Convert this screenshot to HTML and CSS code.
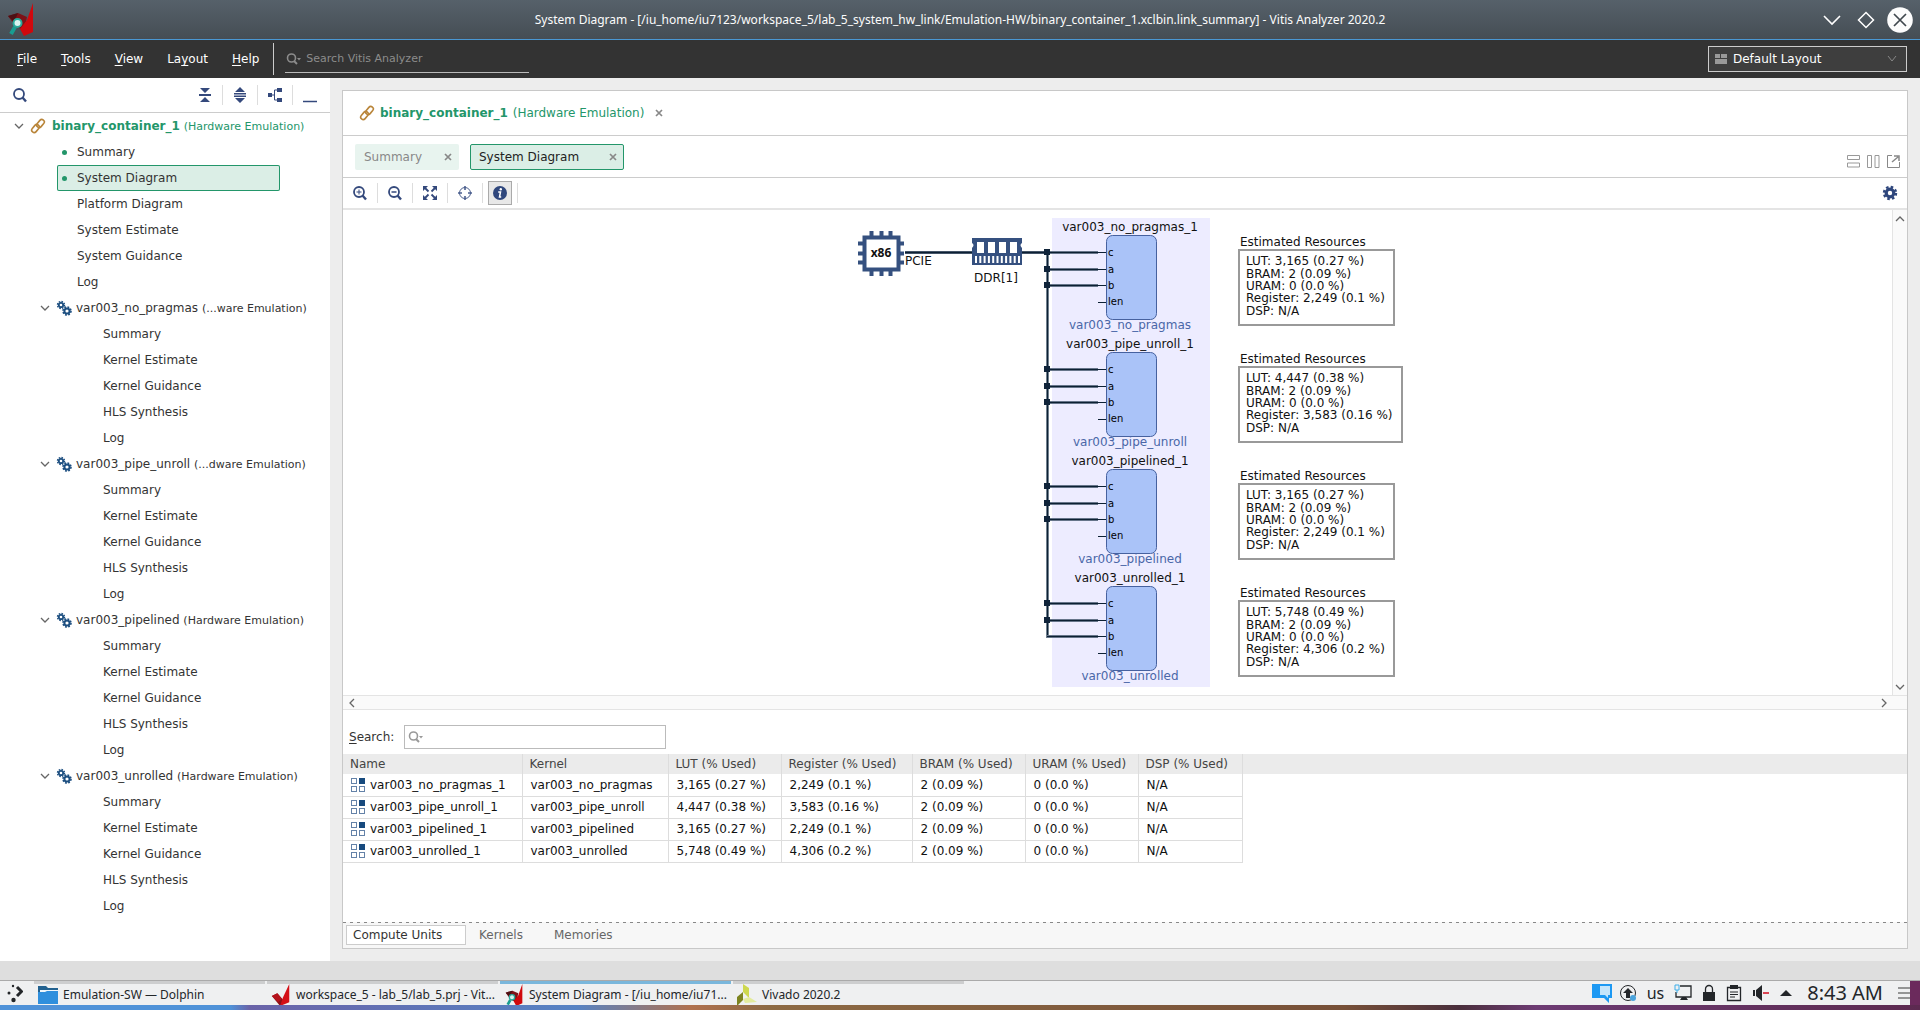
FILE: index.html
```html
<!DOCTYPE html>
<html lang="en">
<head>
<meta charset="utf-8">
<title>Vitis Analyzer 2020.2</title>
<link rel="stylesheet" href="styles.css">
</head>
<body>
<svg class="defs" aria-hidden="true">
  <symbol id="i-link" viewBox="0 0 16 16"><g fill="none" stroke="#b9853a" stroke-width="1.600"><rect x="6" y="3" width="9" height="5" rx="2.500" transform="rotate(-50 10.500 5.500)"/><rect x="1" y="8" width="9" height="5" rx="2.500" transform="rotate(-50 5.500 10.500)"/></g></symbol>
  <symbol id="i-down" viewBox="0 0 10 10"><path d="M1 3l4 4 4-4" fill="none" stroke="#666" stroke-width="1.300"/></symbol>
  <symbol id="i-close" viewBox="0 0 8 8"><path d="M1 1l6 6M7 1L1 7" stroke="#888" stroke-width="1.700"/></symbol>
  <symbol id="i-gears" viewBox="0 0 16 16"><g fill="none" stroke="#1d4f80"><circle cx="5" cy="5" r="2.200" stroke-width="1.800"/><circle cx="5" cy="5" r="3.500" stroke-width="1.400" stroke-dasharray="1.600 1.149"/><circle cx="11" cy="11" r="2.600" stroke-width="2"/><circle cx="11" cy="11" r="4" stroke-width="1.600" stroke-dasharray="1.800 1.342"/></g></symbol>
  <symbol id="i-search" viewBox="0 0 16 16"><circle cx="7" cy="7" r="5" fill="none" stroke="currentColor" stroke-width="1.800"/><path d="M10.500 10.500l3.500 4" stroke="currentColor" stroke-width="2.400"/></symbol>
  <symbol id="i-searchmenu" viewBox="0 0 18 14"><circle cx="5.500" cy="6" r="4" fill="none" stroke="currentColor" stroke-width="1.600"/><path d="M8 9l3 3" stroke="currentColor" stroke-width="2"/><path d="M11 6h4l-2 2.500z" fill="currentColor"/></symbol>
  <symbol id="i-cu" viewBox="0 0 16 16"><g fill="#fff" stroke="#6482a8"><rect x="1.500" y="1.500" width="5" height="5"/><rect x="1.500" y="9.500" width="5" height="5"/><rect x="9.500" y="9.500" width="5" height="5"/></g><path d="M9 1h6v6H9z" fill="#174a7e"/></symbol>
  <symbol id="i-vitis" viewBox="0 0 20 24"><path d="M0 13l6-3 7 8-4 6z" fill="#8d1016"/><path d="M0 13l6-3 5 6-4 4z" fill="#b5121b"/><path d="M19 0v20l-10 4 3-9z" fill="#d40f16"/></symbol>
  <symbol id="i-analyzer" viewBox="0 0 27 33"><path d="M1 13l10-3 9 4-3 13-8-3z" fill="#7d1218"/><path d="M1 13l6 6 4-9z" fill="#4d1014"/><path d="M26 0v29l-9 4-4-7 7-9z" fill="#d0080d"/><path d="M8 24l-4 7" stroke="#189d91" stroke-width="4"/><circle cx="10.500" cy="20" r="4" fill="#d9f3ef" stroke="#29a99b" stroke-width="2"/></symbol>
  <symbol id="block" viewBox="0 0 120 117">
    <path d="M7 34.500h51M7 51.500h51M7 67.500h51" stroke="#66758a" stroke-width="3"/>
    <path d="M7 34.500h59M7 51.500h59M7 67.500h59M58 84.500h8" stroke="#0c2033"/>
    <rect x="66.500" y="17.500" width="50" height="84" rx="6" fill="#aac3f8" stroke="#46619f"/>
  </symbol>
</svg>

<header class="titlebar">
  <svg class="app-logo" width="27" height="33"><use href="#i-analyzer"/></svg>
  <h1>System Diagram - [/iu_home/iu7123/workspace_5/lab_5_system_hw_link/Emulation-HW/binary_container_1.xclbin.link_summary] - Vitis Analyzer 2020.2</h1>
  <div class="window-controls">
    <button aria-label="Minimize"><svg width="26" height="26"><path d="M5 9l8 8 8-8" fill="none" stroke="#fff" stroke-width="1.600"/></svg></button>
    <button aria-label="Maximize"><svg width="26" height="26"><path d="M13 5.500l7.500 7.500-7.500 7.500L5.500 13z" fill="none" stroke="#fff" stroke-width="1.500"/></svg></button>
    <button aria-label="Close"><svg width="26" height="26"><circle cx="13" cy="13" r="12.800" fill="#fcfcfc"/><path d="M7 7l12 12M19 7L7 19" stroke="#40484e" stroke-width="1.700"/></svg></button>
  </div>
</header>

<div class="menubar">
  <nav class="menus">
    <button><u>F</u>ile</button><button><u>T</u>ools</button><button><u>V</u>iew</button><button>La<u>y</u>out</button><button><u>H</u>elp</button>
  </nav>
  <label class="quick"><svg width="18" height="14"><use href="#i-searchmenu"/></svg><input type="text" placeholder="Search Vitis Analyzer" aria-label="Search Vitis Analyzer"></label>
  <label class="layout-select">
    <svg width="12" height="10"><path d="M0 0h5v4H0zM6 0h6v4H6zM0 5h12v5H0z" fill="#999"/></svg>
    <select aria-label="Layout"><option>Default Layout</option></select>
    <svg width="10" height="10"><path d="M1 2l4 5 4-5" fill="none" stroke="#888"/></svg>
  </label>
</div>

<div class="workbench">
  <aside class="sidebar">
    <div class="side-tools">
      <button aria-label="Search"><svg width="16" height="16"><use href="#i-search"/></svg></button>
      <div class="side-group">
        <button aria-label="Collapse all"><svg width="12" height="16"><path d="M1 1h10L6 6zM1 15h10l-5-5zM0 7h12v2H0z" fill="#34497c"/></svg></button>
        <button aria-label="Expand all"><svg width="12" height="16"><path d="M6 0l5 5H1zM0 6h12v1.500H0zM0 8.500h12V10H0zM1 11h10l-5 5z" fill="#34497c"/></svg></button>
        <button aria-label="Hierarchy"><svg width="16" height="16"><path d="M1 6h4v4H1zM10 1h5v4h-5zM10 11h5v4h-5z" fill="#34497c"/><path d="M5 8h2.500M11 3H7.500v10H11" fill="none" stroke="#34497c"/></svg></button>
        <button aria-label="Hide"><svg width="14" height="16"><path d="M0 14.500h14" stroke="#34497c" stroke-width="1.500"/></svg></button>
      </div>
    </div>
    <ul class="tree">
      <li class="root"><svg class="twist"><use href="#i-down"/></svg><svg width="16" height="16"><use href="#i-link"/></svg><a href="#"><b>binary_container_1</b> <small>(Hardware Emulation)</small></a></li>
      <li class="leaf open"><a href="#">Summary</a></li>
      <li class="leaf open selected"><a href="#">System Diagram</a></li>
      <li class="leaf"><a href="#">Platform Diagram</a></li>
      <li class="leaf"><a href="#">System Estimate</a></li>
      <li class="leaf"><a href="#">System Guidance</a></li>
      <li class="leaf"><a href="#">Log</a></li>
      <li class="kernel"><svg class="twist"><use href="#i-down"/></svg><svg width="16" height="16"><use href="#i-gears"/></svg><a href="#">var003_no_pragmas <small>(...ware Emulation)</small></a></li>
      <li class="deep"><a href="#">Summary</a></li>
      <li class="deep"><a href="#">Kernel Estimate</a></li>
      <li class="deep"><a href="#">Kernel Guidance</a></li>
      <li class="deep"><a href="#">HLS Synthesis</a></li>
      <li class="deep"><a href="#">Log</a></li>
      <li class="kernel"><svg class="twist"><use href="#i-down"/></svg><svg width="16" height="16"><use href="#i-gears"/></svg><a href="#">var003_pipe_unroll <small>(...dware Emulation)</small></a></li>
      <li class="deep"><a href="#">Summary</a></li>
      <li class="deep"><a href="#">Kernel Estimate</a></li>
      <li class="deep"><a href="#">Kernel Guidance</a></li>
      <li class="deep"><a href="#">HLS Synthesis</a></li>
      <li class="deep"><a href="#">Log</a></li>
      <li class="kernel"><svg class="twist"><use href="#i-down"/></svg><svg width="16" height="16"><use href="#i-gears"/></svg><a href="#">var003_pipelined <small>(Hardware Emulation)</small></a></li>
      <li class="deep"><a href="#">Summary</a></li>
      <li class="deep"><a href="#">Kernel Estimate</a></li>
      <li class="deep"><a href="#">Kernel Guidance</a></li>
      <li class="deep"><a href="#">HLS Synthesis</a></li>
      <li class="deep"><a href="#">Log</a></li>
      <li class="kernel"><svg class="twist"><use href="#i-down"/></svg><svg width="16" height="16"><use href="#i-gears"/></svg><a href="#">var003_unrolled <small>(Hardware Emulation)</small></a></li>
      <li class="deep"><a href="#">Summary</a></li>
      <li class="deep"><a href="#">Kernel Estimate</a></li>
      <li class="deep"><a href="#">Kernel Guidance</a></li>
      <li class="deep"><a href="#">HLS Synthesis</a></li>
      <li class="deep"><a href="#">Log</a></li>
    </ul>
  </aside>

  <main class="panel">
    <div class="doc-head"><svg width="16" height="16"><use href="#i-link"/></svg><span><b>binary_container_1</b> (Hardware Emulation)</span><button aria-label="Close binary_container_1"><svg width="8" height="8"><use href="#i-close"/></svg></button></div>
    <div class="tabs">
      <div class="tab"><span>Summary</span><button aria-label="Close Summary"><svg width="8" height="8"><use href="#i-close"/></svg></button></div>
      <div class="tab active"><span>System Diagram</span><button aria-label="Close System Diagram"><svg width="8" height="8"><use href="#i-close"/></svg></button></div>
      <div class="tab-tools">
        <button aria-label="Split horizontally"><svg width="13" height="13"><path d="M.5.500h12v4H.5zM.5 8h12v4H.5z" fill="none" stroke="#999"/></svg></button>
        <button aria-label="Split vertically"><svg width="13" height="13"><path d="M.5.500h4v12h-4zM8 .5h4v12H8z" fill="none" stroke="#999"/></svg></button>
        <button aria-label="Float"><svg width="13" height="13"><path d="M5 .5H.5v12h12V7" fill="none" stroke="#888"/><path d="M5 7l6-5M7 1h5v5" fill="none" stroke="#888" stroke-width="1.500"/></svg></button>
      </div>
    </div>
    <div class="tools">
      <button aria-label="Zoom in"><svg width="16" height="16"><use href="#i-search"/><path d="M4.500 7h5M7 4.500v5" stroke="#34497c"/></svg></button>
      <button aria-label="Zoom out"><svg width="16" height="16"><use href="#i-search"/><path d="M4.500 7h5" stroke="#34497c" stroke-width="1.500"/></svg></button>
      <button aria-label="Zoom fit"><svg width="16" height="16"><path d="M1 1h5L1 6zM15 1v5l-5-5zM1 15v-5l5 5zM15 15h-5l5-5z" fill="#34497c"/><path d="M2 2l4.500 4.500M14 2L9.500 6.500M2 14l4.500-4.500M14 14L9.500 9.500" stroke="#34497c" stroke-width="1.800"/></svg></button>
      <button aria-label="Autofit selection"><svg width="16" height="16"><circle cx="8" cy="8" r="5.500" fill="none" stroke="#4b5f8e"/><path d="M8 1v4M8 11v4M1 8h4M11 8h4" stroke="#4b5f8e" stroke-width="1.600"/></svg></button>
      <button class="pressed" aria-label="Show information"><svg width="16" height="16"><circle cx="8" cy="8" r="7" fill="#2f477d"/><circle cx="8.800" cy="4.200" r="1.200" fill="#fff"/><path d="M6.200 7h2.300l-1 5h1.700" fill="none" stroke="#fff" stroke-width="1.500"/></svg></button>
      <i class="rule"></i>
      <button class="settings" aria-label="Settings"><svg width="16" height="16"><circle cx="8" cy="8" r="3.800" fill="none" stroke="#2f477d" stroke-width="3.200"/><circle cx="8" cy="8" r="6" fill="none" stroke="#2f477d" stroke-width="2.400" stroke-dasharray="2.500 2.212"/></svg></button>
    </div>

    <div class="canvas">
      <div class="stage">
        <svg class="diagram" width="544" height="485" viewBox="858 210 544 485">
          <rect x="1052" y="218" width="158" height="469" fill="#edecff"/>
          <path d="M905 252.500h67M1022 252.500h25" stroke="#445468" stroke-width="3"/>
          <path d="M905 252.500h67M1022 252.500h25" stroke="#0c2033"/>
          <path d="M1047.500 252v384.500h10" fill="none" stroke="#70808f" stroke-width="3"/>
          <path d="M1047.500 252v384.500h10" fill="none" stroke="#0c2033"/>
          <rect x="864.500" y="237.500" width="34" height="32" fill="#fff" stroke="#35507f" stroke-width="4"/>
          <path d="M871.500 231v6M881.500 231v6M890.500 231v6M871.500 270v6M881.500 270v6M890.500 270v6M858 243.500h6M858 253.500h6M858 262.500h6M898 243.500h6M898 253.500h6M898 262.500h6" stroke="#35507f" stroke-width="4"/>
          <text x="881" y="257" text-anchor="middle" class="cpu">x86</text>
          <path d="M972 238h50v5q-3 2 0 5v17h-50v-17q3-3 0-5z" fill="#35507f"/>
          <path d="M977 242h7v11h-7zM988 242h7v11h-7zM999 242h7v11h-7zM1010 242h7v11h-7z" fill="#fff"/>
          <path d="M975 259.500h45" stroke="#fff" stroke-width="7" stroke-dasharray="2 2.300"/>
          <text x="905" y="265">PCIE</text>
          <text x="996" y="282" text-anchor="middle">DDR[1]</text>
          <use href="#block" x="1040" y="218" width="120" height="117"/>
          <use href="#block" x="1040" y="335" width="120" height="117"/>
          <use href="#block" x="1040" y="452" width="120" height="117"/>
          <use href="#block" x="1040" y="569" width="120" height="117"/>
          <g class="port">
            <text x="1108" y="256">c</text><text x="1108" y="273">a</text><text x="1108" y="289">b</text><text x="1108" y="305">len</text>
            <text x="1108" y="373">c</text><text x="1108" y="390">a</text><text x="1108" y="406">b</text><text x="1108" y="422">len</text>
            <text x="1108" y="490">c</text><text x="1108" y="507">a</text><text x="1108" y="523">b</text><text x="1108" y="539">len</text>
            <text x="1108" y="607">c</text><text x="1108" y="624">a</text><text x="1108" y="640">b</text><text x="1108" y="656">len</text>
          </g>
          <path d="M1044 249h6v6h-6zM1044 266h6v6h-6zM1044 282h6v6h-6zM1044 366h6v6h-6zM1044 383h6v6h-6zM1044 399h6v6h-6zM1044 483h6v6h-6zM1044 500h6v6h-6zM1044 516h6v6h-6zM1044 600h6v6h-6zM1044 617h6v6h-6z" fill="#10243a"/>
          <g text-anchor="middle"><text x="1130" y="231">var003_no_pragmas_1</text><text x="1130" y="348">var003_pipe_unroll_1</text><text x="1130" y="465">var003_pipelined_1</text><text x="1130" y="582">var003_unrolled_1</text></g>
          <g text-anchor="middle" class="kname"><text x="1130" y="329">var003_no_pragmas</text><text x="1130" y="446">var003_pipe_unroll</text><text x="1130" y="563">var003_pipelined</text><text x="1130" y="680">var003_unrolled</text></g>
          <g fill="#fff" stroke="#999" stroke-width="2"><rect x="1239" y="250" width="155" height="75"/><rect x="1239" y="367" width="163" height="75"/><rect x="1239" y="484" width="155" height="75"/><rect x="1239" y="601" width="155" height="75"/></g>
          <text x="1240" y="246">Estimated Resources</text>
          <text><tspan x="1246" y="265">LUT: 3,165 (0.27 %)</tspan><tspan x="1246" y="278">BRAM: 2 (0.09 %)</tspan><tspan x="1246" y="290">URAM: 0 (0.0 %)</tspan><tspan x="1246" y="302">Register: 2,249 (0.1 %)</tspan><tspan x="1246" y="315">DSP: N/A</tspan></text>
          <text x="1240" y="363">Estimated Resources</text>
          <text><tspan x="1246" y="382">LUT: 4,447 (0.38 %)</tspan><tspan x="1246" y="395">BRAM: 2 (0.09 %)</tspan><tspan x="1246" y="407">URAM: 0 (0.0 %)</tspan><tspan x="1246" y="419">Register: 3,583 (0.16 %)</tspan><tspan x="1246" y="432">DSP: N/A</tspan></text>
          <text x="1240" y="480">Estimated Resources</text>
          <text><tspan x="1246" y="499">LUT: 3,165 (0.27 %)</tspan><tspan x="1246" y="512">BRAM: 2 (0.09 %)</tspan><tspan x="1246" y="524">URAM: 0 (0.0 %)</tspan><tspan x="1246" y="536">Register: 2,249 (0.1 %)</tspan><tspan x="1246" y="549">DSP: N/A</tspan></text>
          <text x="1240" y="597">Estimated Resources</text>
          <text><tspan x="1246" y="616">LUT: 5,748 (0.49 %)</tspan><tspan x="1246" y="629">BRAM: 2 (0.09 %)</tspan><tspan x="1246" y="641">URAM: 0 (0.0 %)</tspan><tspan x="1246" y="653">Register: 4,306 (0.2 %)</tspan><tspan x="1246" y="666">DSP: N/A</tspan></text>
        </svg>
      </div>
      <div class="vscroll"><svg width="10" height="10"><path d="M1 7l4-4 4 4" fill="none" stroke="#666" stroke-width="1.300"/></svg><svg width="10" height="10"><use href="#i-down"/></svg></div>
    </div>
    <div class="hscroll"><svg width="10" height="10"><path d="M7 1L3 5l4 4" fill="none" stroke="#666" stroke-width="1.300"/></svg><svg width="10" height="10"><path d="M3 1l4 4-4 4" fill="none" stroke="#666" stroke-width="1.300"/></svg></div>

    <div class="search-row"><label for="cu-search"><u>S</u>earch:</label><div class="search-box"><svg width="18" height="14"><use href="#i-searchmenu"/></svg><input id="cu-search" type="text"></div></div>
    <table class="units">
      <colgroup><col class="c-name"><col class="c-kernel"><col class="c-res"><col class="c-reg"><col class="c-res"><col class="c-res"><col class="c-dsp"><col></colgroup>
      <thead><tr><th>Name</th><th>Kernel</th><th>LUT (% Used)</th><th>Register (% Used)</th><th>BRAM (% Used)</th><th>URAM (% Used)</th><th>DSP (% Used)</th><th></th></tr></thead>
      <tbody>
        <tr><td><svg width="16" height="16"><use href="#i-cu"/></svg>var003_no_pragmas_1</td><td>var003_no_pragmas</td><td>3,165 (0.27 %)</td><td>2,249 (0.1 %)</td><td>2 (0.09 %)</td><td>0 (0.0 %)</td><td>N/A</td></tr>
        <tr><td><svg width="16" height="16"><use href="#i-cu"/></svg>var003_pipe_unroll_1</td><td>var003_pipe_unroll</td><td>4,447 (0.38 %)</td><td>3,583 (0.16 %)</td><td>2 (0.09 %)</td><td>0 (0.0 %)</td><td>N/A</td></tr>
        <tr><td><svg width="16" height="16"><use href="#i-cu"/></svg>var003_pipelined_1</td><td>var003_pipelined</td><td>3,165 (0.27 %)</td><td>2,249 (0.1 %)</td><td>2 (0.09 %)</td><td>0 (0.0 %)</td><td>N/A</td></tr>
        <tr><td><svg width="16" height="16"><use href="#i-cu"/></svg>var003_unrolled_1</td><td>var003_unrolled</td><td>5,748 (0.49 %)</td><td>4,306 (0.2 %)</td><td>2 (0.09 %)</td><td>0 (0.0 %)</td><td>N/A</td></tr>
      </tbody>
    </table>
    <div class="bottom-tabs"><button class="current">Compute Units</button><button>Kernels</button><button>Memories</button></div>
  </main>
</div>

<div class="statusbar"></div>

<footer class="taskbar">
  <button class="launcher" aria-label="Applications"><svg width="16" height="20"><circle cx="2" cy="10" r="1.500" fill="#232629"/><circle cx="6" cy="3" r="1.200" fill="#232629"/><circle cx="6.500" cy="17" r="2.200" fill="#232629"/><path d="M10 4l4.500 4.500L10 13" fill="none" stroke="#232629" stroke-width="3"/></svg></button>
  <div class="tasks">
    <button class="task"><svg width="20" height="18"><path d="M0 0h8l2 2h10v4H0z" fill="#22618f"/><path d="M2 4h18v4H2z" fill="#eef6fb"/><path d="M0 6h7l2-1h11v13H0z" fill="#2f8fdd"/></svg><span>Emulation-SW — Dolphin</span></button>
    <button class="task"><svg width="20" height="22"><use href="#i-vitis"/></svg><span>workspace_5 - lab_5/lab_5.prj - Vit...</span></button>
    <button class="task active"><svg width="20" height="22"><use href="#i-analyzer"/></svg><span>System Diagram - [/iu_home/iu71...</span></button>
    <button class="task"><svg width="20" height="22"><path d="M6 0l6 4v10l-6-6z" fill="#ced84f"/><path d="M6 8l0 8-6 6v-9z" fill="#7d8420"/><path d="M12 13l8 5-12 1-2-4z" fill="#e3eb9d"/></svg><span>Vivado 2020.2</span></button>
  </div>
  <div class="tray">
    <div class="notices">
      <svg width="20" height="20"><path d="M0 1h20v14h-3v5l-5-5H0z" fill="#1d99f3"/><path d="M8 3h10v9h-2v3l-3-3H8z" fill="#c4e5fb"/></svg>
      <svg width="18" height="18"><circle cx="9" cy="9" r="7.500" fill="none" stroke="#232629"/><path d="M9 4l5 5h-3v5H7V9H4z" fill="#232629"/><circle cx="14" cy="14" r="3" fill="#4aa3dc"/></svg>
    </div>
    <span class="kbd">us</span>
    <svg width="18" height="18"><path d="M6 2h11v11H2V8" fill="none" stroke="#232629" stroke-width="1.300"/><path d="M6 16h8l-2-3H8z" fill="#232629"/><path d="M1 1h4v5H1zM3 6v3" fill="none" stroke="#3daee9"/></svg>
    <svg width="14" height="18"><path d="M1 8h12v9H1z" fill="#232629"/><path d="M3.500 8V5a3.500 3.500 0 017 0v3" fill="none" stroke="#232629" stroke-width="1.300"/></svg>
    <svg width="16" height="18"><path d="M1.500 3.500h13v13h-13z" fill="none" stroke="#232629" stroke-width="1.300"/><path d="M4 1h8v4H4z" fill="#232629"/><path d="M4 8h8M4 10.500h8M4 13h5" stroke="#232629"/></svg>
    <svg width="18" height="18"><path d="M1 6h2v6H1zM4 6l6-5v16l-6-5z" fill="#232629"/><path d="M11 9h6" stroke="#da4453" stroke-width="2"/></svg>
    <svg width="12" height="8"><path d="M0 7l6-6 6 6z" fill="#232629"/></svg>
    <time>8:43 AM</time>
    <svg width="12" height="18"><path d="M0 4h12M0 9h12M0 14h12" stroke="#777" stroke-width="1.500"/></svg>
  </div>
</footer>
<div class="wallpaper"></div>
</body>
</html>
```
FILE: styles.css
```css
* { box-sizing: border-box; }
body {
  margin: 0;
  min-height: 100vh;
  display: flex;
  flex-direction: column;
  background: #ededed;
  color: #333;
  font: 12px/16px "DejaVu Sans", sans-serif;
}
button { margin: 0; padding: 0; border: 0; background: none; color: inherit; font: inherit; }
input, select { margin: 0; padding: 0; border: 0; background: none; color: inherit; font: inherit; outline: 0; }
a { color: inherit; text-decoration: none; }
svg { display: block; flex: none; }
u { text-underline-offset: 2px; }
.defs { position: absolute; width: 0; height: 0; }

.titlebar {
  display: grid;
  grid-template-columns: 120px 1fr 120px;
  align-items: center;
  height: 40px;
  border-bottom: 1px solid #4a98d3;
  background: linear-gradient(#56616a, #454d54);
  color: #fcfcfc;
}
.app-logo { margin-left: 7px; }
.titlebar h1 { margin: 0; font: 12px/20px "Noto Sans", sans-serif; text-align: center; white-space: nowrap; }
.window-controls { display: flex; justify-content: flex-end; gap: 8px; padding-right: 7px; }

.menubar { display: flex; align-items: center; height: 38px; background: #333; color: #fff; }
.menus { display: flex; gap: 24px; padding: 0 14px 0 17px; }
.quick {
  position: relative;
  display: flex;
  align-items: center;
  gap: 2px;
  width: 256px;
  height: 32px;
  padding-left: 12px;
  border-left: 1px solid #ccc;
  color: #8c8c8c;
  font-size: 11px;
}
.quick input { flex: 1; min-width: 0; }
.quick::after { content: ""; position: absolute; left: 11px; right: 0; bottom: 2px; height: 1px; background: #bbb; }
.quick input::placeholder { color: #8c8c8c; opacity: 1; }
.layout-select {
  display: flex;
  align-items: center;
  gap: 6px;
  width: 199px;
  height: 26px;
  margin: 0 13px 0 auto;
  padding: 0 9px 0 6px;
  border: 1px solid #ccc;
  background: #3e3e3e;
}
.layout-select select { flex: 1; appearance: none; }

.workbench { flex: 1; display: flex; }
.sidebar { width: 330px; flex: none; background: #fff; }
.side-tools {
  display: flex;
  align-items: center;
  justify-content: space-between;
  height: 35px;
  padding: 0 10px 0 12px;
  border-bottom: 1px solid #ccc;
  color: #34497c;
}
.side-group { display: flex; }
.side-group button { display: flex; justify-content: center; width: 35px; height: 20px; align-items: center; }
.side-group button + button { border-left: 1px solid #ddd; }
.side-group button:last-child { width: 28px; justify-content: flex-end; padding-right: 3px; }
.tree { margin: 0; padding: 0; list-style: none; }
.tree li { display: flex; align-items: center; height: 26px; white-space: nowrap; }
.tree small { font-size: 11px; }
.twist { width: 10px; height: 10px; }
.tree .root { padding-left: 14px; gap: 6px; color: #23966a; }
.tree .kernel { padding-left: 40px; gap: 6px; }
.tree .kernel a { margin-left: -2px; }
.tree .leaf { margin-left: 57px; padding-left: 20px; width: 223px; position: relative; }
.tree .deep { padding-left: 103px; }
.tree .open::before { content: ""; position: absolute; left: 5px; width: 5px; height: 5px; border-radius: 50%; background: #23966a; }
.tree .selected { box-shadow: inset 0 0 0 1px #23966a; background: #dbeee6; border-radius: 2px; }

.panel {
  flex: 1;
  min-width: 0;
  display: flex;
  flex-direction: column;
  margin: 12px;
  border: 1px solid #c8c8c8;
  background: #fff;
}
.doc-head {
  display: flex;
  align-items: center;
  gap: 5px;
  height: 45px;
  padding-left: 16px;
  border-bottom: 1px solid #ccc;
  color: #23966a;
}
.doc-head b { margin-right: 1px; }
.doc-head button { margin-left: 6px; }
.tabs { display: flex; align-items: center; gap: 11px; height: 42px; padding: 0 7px 0 12px; border-bottom: 1px solid #ccc; }
.tab {
  display: flex;
  align-items: center;
  justify-content: space-between;
  width: 104px;
  height: 26px;
  padding: 0 7px 0 9px;
  border-radius: 2px;
  background: #e8f4ef;
  color: #888;
}
.tab.active { width: 154px; padding: 0 6px 0 8px; border: 1px solid #23966a; background: #dbeee6; color: #222; }
.tab-tools { display: flex; gap: 7px; margin: 10px 0 0 auto; }
.tools { display: flex; align-items: center; height: 32px; border-bottom: 2px solid #e4e4e4; color: #34497c; }
.tools button { display: flex; align-items: center; justify-content: center; width: 35px; height: 20px; border-right: 1px solid #ddd; }
.tools .pressed { width: 24px; height: 24px; margin: 0 5px; border: 1px solid #aaa; background: #e8e8e8; }
.tools .rule { width: 1px; height: 20px; background: #ddd; }
.tools .settings { margin-left: auto; border: 0; }

.canvas { display: flex; }
.stage { flex: 1; display: flex; justify-content: center; padding-left: 24px; overflow: hidden; }
.diagram { overflow: visible; font-size: 12px; fill: #111; }
.port { font-size: 10px; fill: #000; }
.kname { fill: #4a67a8; }
.cpu { font: bold 12px "Open Sans", sans-serif; fill: #111; }
.vscroll {
  display: flex;
  flex-direction: column;
  justify-content: space-between;
  align-items: center;
  width: 15px;
  padding: 4px 0 3px;
  border-left: 1px solid #e4e4e4;
  background: #fafafa;
}
.hscroll { display: flex; justify-content: space-between; align-items: center; height: 15px; padding: 0 18px 0 4px; border: solid #e4e4e4; border-width: 1px 0; background: #fafafa; }

.search-row { display: flex; align-items: center; gap: 10px; padding: 15px 0 5px 6px; }
.search-box { display: flex; align-items: center; width: 262px; height: 24px; padding-left: 3px; border: 1px solid #bbb; color: #999; }
.search-box input { flex: 1; color: #222; }
.units { width: 100%; table-layout: fixed; border-collapse: collapse; color: #111; }
.c-name { width: 179px; }
.c-kernel { width: 146px; }
.c-res { width: 113px; }
.c-reg { width: 131px; }
.c-dsp { width: 104px; }
.units th { height: 20px; padding: 0 0 0 7px; border-right: 1px solid #ddd; background: #ebebeb; color: #444; font-weight: normal; text-align: left; white-space: nowrap; }
.units th:last-child { border-right: 0; }
.units td { height: 22px; padding: 0 0 0 8px; border: solid #ddd; border-width: 0 1px 1px 0; white-space: nowrap; }
.units td svg { display: inline-block; margin-right: 4px; vertical-align: -4px; }
.units td:first-child { padding-left: 7px; }
.bottom-tabs {
  display: flex;
  align-items: center;
  gap: 31px;
  height: 26px;
  margin-top: auto;
  padding-left: 3px;
  background: repeating-linear-gradient(90deg, #888 0 3px, transparent 3px 7px) top / 100% 1px no-repeat #f7f7f7;
  color: #666;
}
.bottom-tabs .current { width: 120px; height: 20px; margin-right: -18px; padding-left: 6px; border: 1px solid #ccc; background: #fff; color: #333; text-align: left; }

.statusbar { height: 19px; background: #dedede; }
.taskbar {
  display: flex;
  height: 25px;
  border-top: 1px solid #aaa;
  background: linear-gradient(#6b2a5c, #6b2a5c) right / 10px 100% no-repeat #eff0f1;
  color: #232629;
  font-family: "Noto Sans", sans-serif;
}
.launcher { width: 34px; padding-left: 7px; }
.tasks { display: flex; gap: 2px; }
.task { display: flex; align-items: center; gap: 5px; width: 231px; padding: 1px 0 0 4px; border-top: 3px solid #cdcecf; }
.task.active { border-color: #7ab7dc; }
.task span { white-space: nowrap; }
.tray { display: flex; align-items: center; gap: 10px; margin-left: auto; padding-right: 10px; }
.notices { display: flex; align-items: center; gap: 7px; }
.kbd { font-size: 16px; line-height: 20px; }
.tray time { font-size: 20px; line-height: 22px; margin: 0 5px; }
.wallpaper { height: 5px; background: linear-gradient(90deg, #4f92d8 0 12%, #6a63a8 13%, #5683c4 30%, #b0714f 36%, #8d6a44 40%, #775038 70%, #4a2f3c 76%, #6d3b73 80%, #5c2a50); }
```
